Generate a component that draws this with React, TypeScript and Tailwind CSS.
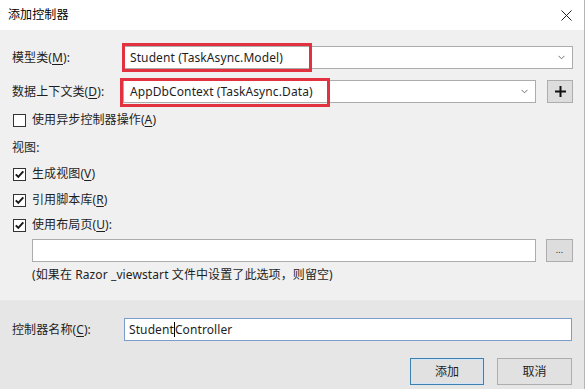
import React from "react";

const font = { fontFamily: '"Noto Sans", "Noto Sans CJK SC", sans-serif' };

function Chevron() {
  return (
    <svg width="7" height="5" viewBox="0 0 7 5" className="shrink-0">
      <path d="M0.5 0.8 L3.5 3.8 L6.5 0.8" fill="none" stroke="#707070" strokeWidth="1" />
    </svg>
  );
}

function Check({ checked }: { checked: boolean }) {
  return (
    <div className="w-[13px] h-[13px] border border-[#333333] bg-white flex items-center justify-center shrink-0">
      {checked && (
        <svg width="11" height="11" viewBox="0 0 11 11">
          <path d="M1.8 5.4 L4.3 7.9 L9.3 2.4" fill="none" stroke="#1a1a1a" strokeWidth="2" />
        </svg>
      )}
    </div>
  );
}

function Mn({ pre, k, post }: { pre: string; k: string; post: string }) {
  return (
    <span>
      {pre}(<span className="underline underline-offset-2">{k}</span>){post}
    </span>
  );
}

export default function App() {
  return (
    <div
      className="w-[585px] h-[389px] bg-[#f0f0f0] flex flex-col text-[12px] text-[#1e1e1e] border-r border-[#b5b5b5] overflow-hidden tracking-[0.1px]"
      style={font}
    >
      {/* Title bar */}
      <div className="h-[30px] bg-white flex items-center justify-between pl-[8px] pr-[12px] shrink-0">
        <span className="text-[12px] text-black">添加控制器</span>
        <svg width="11" height="11" viewBox="0 0 11 11">
          <path d="M0.5 0.5 L10.5 10.5 M10.5 0.5 L0.5 10.5" stroke="#222" strokeWidth="1" />
        </svg>
      </div>

      {/* Body */}
      <div className="flex flex-col pl-[12px] pr-[11px] pt-[16px] h-[270px] shrink-0">
        {/* Model row */}
        <div className="flex items-center h-[23px]">
          <div className="w-[111px] shrink-0">
            <Mn pre="模型类" k="M" post=":" />
          </div>
          <div className="relative flex-1 h-[23px] bg-white border border-[#acacac] flex items-center justify-between pl-[6px] pr-[7px]">
            <span>Student (TaskAsync.Model)</span>
            <Chevron />
            <div className="absolute left-[-2px] top-[-4px] w-[190px] h-[29px] border-[3px] border-[#e3323f]" />
          </div>
        </div>

        {/* Data context row */}
        <div className="flex items-center h-[23px] mt-[11px]">
          <div className="w-[111px] shrink-0">
            <Mn pre="数据上下文类" k="D" post=":" />
          </div>
          <div className="relative flex-1 h-[23px] bg-white border border-[#acacac] flex items-center justify-between pl-[6px] pr-[7px]">
            <span>AppDbContext (TaskAsync.Data)</span>
            <Chevron />
            <div className="absolute left-[-4px] top-[-3px] w-[210px] h-[29px] border-[3px] border-[#e3323f]" />
          </div>
          <div className="ml-[11px] w-[26px] h-[23px] bg-[#dddddd] border border-[#adadad] flex items-center justify-center shrink-0">
            <svg width="11" height="11" viewBox="0 0 11 11">
              <path d="M5.5 0 V11 M0 5.5 H11" stroke="#111" strokeWidth="2" />
            </svg>
          </div>
        </div>

        {/* Async checkbox */}
        <div className="flex items-center h-[14px] mt-[10px] pl-[1px] gap-[6px]">
          <Check checked={false} />
          <Mn pre="使用异步控制器操作" k="A" post="" />
        </div>

        <div className="mt-[14px] h-[14px] flex items-center">视图:</div>

        <div className="flex items-center h-[14px] mt-[12px] pl-[1px] gap-[6px]">
          <Check checked />
          <Mn pre="生成视图" k="V" post="" />
        </div>
        <div className="flex items-center h-[14px] mt-[12px] pl-[1px] gap-[6px]">
          <Check checked />
          <Mn pre="引用脚本库" k="R" post="" />
        </div>
        <div className="flex items-center h-[14px] mt-[11px] pl-[1px] gap-[6px]">
          <Check checked />
          <Mn pre="使用布局页" k="U" post=":" />
        </div>

        <div className="flex items-center mt-[7px] pl-[20px]">
          <div className="flex-1 h-[23px] bg-white border border-[#acacac]" />
          <div className="ml-[10px] w-[27px] h-[23px] bg-[#dddddd] border border-[#adadad] flex items-center justify-center shrink-0 text-[9px] leading-none pb-[2px]">
            ...
          </div>
        </div>

        <div className="pl-[20px] mt-[5px] h-[16px] flex items-center">
          (如果在 Razor _viewstart 文件中设置了此选项，则留空)
        </div>
      </div>

      {/* Footer */}
      <div className="flex-1 bg-[#e6e6e6] border-t border-[#e9e9e9] flex flex-col pl-[12px] pr-[12px] pt-[17px]">
        <div className="flex items-center h-[23px]">
          <div className="w-[112px] shrink-0">
            <Mn pre="控制器名称" k="C" post=":" />
          </div>
          <div className="flex-1 h-[23px] bg-white border border-[#7b9ccc] flex items-center pl-[4px]">
            <span>Student</span>
            <span className="inline-block w-px h-[15px] bg-black" />
            <span>Controller</span>
          </div>
        </div>
        <div className="flex justify-end gap-[13px] mt-[17px]">
          <div className="w-[74px] h-[27px] bg-[#e1e1e1] border border-[#3c7fb1] flex items-center justify-center shadow-[inset_0_0_0_1px_#d0e6f8]">
            添加
          </div>
          <div className="w-[75px] h-[27px] bg-[#e1e1e1] border border-[#adadad] flex items-center justify-center">
            取消
          </div>
        </div>
      </div>
    </div>
  );
}
